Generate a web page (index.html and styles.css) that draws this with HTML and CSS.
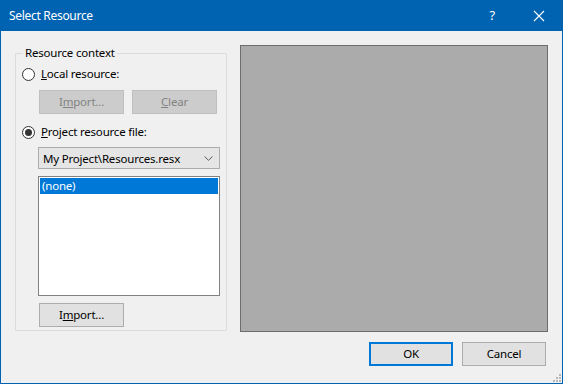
FILE: index.html
```html
<!DOCTYPE html>
<html>
<head>
<meta charset="utf-8">
<link rel="stylesheet" href="styles.css">
</head>
<body>
<div class="window">
  <div class="titlebar">
    <span class="title">Select Resource</span>
    <span class="help">?</span>
    <svg class="close" width="12" height="12" viewBox="0 0 12 12"><path d="M1 1L11 11M11 1L1 11" stroke="#fff" stroke-width="1.1" fill="none"/></svg>
  </div>
  <div class="content">
    <div class="main">
      <fieldset class="group">
        <legend class="legend">Resource context</legend>
        <div class="groupbody">
          <div class="radio-row r1">
            <span class="radio"></span>
            <span class="label"><u>L</u>ocal resource:</span>
          </div>
          <div class="btn-row">
            <span class="btn disabled">I<u>m</u>port...</span>
            <span class="btn disabled"><u>C</u>lear</span>
          </div>
          <div class="radio-row r2">
            <span class="radio checked"></span>
            <span class="label"><u>P</u>roject resource file:</span>
          </div>
          <div class="combo">
            <span class="combo-text">My Project\Resources.resx</span>
            <svg class="chev" width="9" height="5" viewBox="0 0 9 5"><path d="M0.5 0.5L4.5 4.3L8.5 0.5" stroke="#5a5a5a" stroke-width="1" fill="none"/></svg>
          </div>
          <div class="listbox">
            <div class="item selected">(none)</div>
          </div>
          <div class="btn-row bottom">
            <span class="btn">I<u>m</u>port...</span>
          </div>
        </div>
      </fieldset>
      <div class="preview"></div>
    </div>
    <div class="footer">
      <span class="btn default">OK</span>
      <span class="btn">Cancel</span>
    </div>
  </div>
  <svg class="grip" width="10" height="10" viewBox="0 0 10 10">
    <rect x="7" y="1" width="2" height="2" fill="#b8b8b8"/>
    <rect x="4" y="4" width="2" height="2" fill="#b8b8b8"/>
    <rect x="7" y="4" width="2" height="2" fill="#b8b8b8"/>
    <rect x="1" y="7" width="2" height="2" fill="#b8b8b8"/>
    <rect x="4" y="7" width="2" height="2" fill="#b8b8b8"/>
    <rect x="7" y="7" width="2" height="2" fill="#b8b8b8"/>
  </svg>
</div>
</body>
</html>
```

FILE: styles.css
```css
* { box-sizing: border-box; }
html, body { margin: 0; padding: 0; }
body {
  font-family: "Noto Sans", "Open Sans", sans-serif;
  font-size: 11.5px;
  letter-spacing: -0.2px;
  color: #000;
  background: #f0f0f0;
}
.window {
  position: relative;
  width: 563px;
  height: 384px;
  border: 1px solid #0063b1;
  border-top: none;
  background: #f0f0f0;
  display: flex;
  flex-direction: column;
}
.titlebar {
  height: 31px;
  margin: 0 -1px;
  background: #0063b1;
  color: #fff;
  display: flex;
  align-items: center;
  padding-left: 9px;
  padding-right: 18px;
}
.title { font-size: 12px; letter-spacing: -0.3px; flex: 1; padding-bottom: 1px; }
.help { font-size: 13px; margin-right: 38px; padding-bottom: 1px; }
.close { display: block; margin-top: 1px; }
.content {
  flex: 1;
  display: flex;
  flex-direction: column;
  padding: 14px 14px 0 14px;
}
.main {
  display: flex;
  gap: 13px;
  height: 286px;
}
.group {
  margin: 0;
  width: 212px;
  height: 286px;
  border: 1px solid #dcdcdc;
  padding: 0 0 0 6px;
  min-width: 0;
}
.legend {
  padding: 0 2px;
  margin-left: 1px;
  line-height: 16px;
}
.groupbody {
  display: flex;
  flex-direction: column;
  align-items: flex-start;
}
.radio-row {
  display: flex;
  align-items: center;
  height: 16px;
}
.r1 { margin-top: 5px; }
.r2 { margin-top: 10px; }
.radio {
  width: 13px;
  height: 13px;
  border: 1px solid #333;
  border-radius: 50%;
  background: #fff;
  margin-right: 6px;
  display: flex;
  align-items: center;
  justify-content: center;
}
.radio.checked::after {
  content: "";
  width: 7px;
  height: 7px;
  border-radius: 50%;
  background: #333;
}
.label { line-height: 16px; }
.btn-row {
  display: flex;
  gap: 8px;
  margin-top: 8px;
  margin-left: 17px;
}
.btn-row.bottom { margin-top: 7px; }
.btn {
  width: 85px;
  height: 24px;
  border: 1px solid #adadad;
  background: #e1e1e1;
  display: flex;
  align-items: center;
  justify-content: center;
  line-height: 16px;
}
.btn.disabled {
  background: #cccccc;
  border-color: #bfbfbf;
  color: #838383;
}
.btn.default {
  border: 2px solid #0078d7;
}
.combo {
  margin-top: 7px;
  margin-left: 16px;
  width: 182px;
  height: 22px;
  border: 1px solid #acacac;
  background: #e5e5e5;
  display: flex;
  align-items: center;
  padding: 0 6px 0 4px;
}
.combo-text { flex: 1; }
.chev { display: block; }
.listbox {
  margin-top: 7px;
  margin-left: 16px;
  width: 182px;
  height: 120px;
  border: 1px solid #828282;
  background: #fff;
  padding: 1px;
}
.item {
  height: 16px;
  line-height: 16px;
  padding-left: 2px;
}
.item.selected {
  background: #0078d7;
  color: #fff;
}
.preview {
  width: 308px;
  height: 287px;
  border: 1px solid #6d6d6d;
  background: #ababab;
}
.footer {
  display: flex;
  justify-content: flex-end;
  gap: 9px;
  margin-top: 11px;
  padding-right: 2px;
}
.footer .btn { width: 84px; }
.grip {
  position: absolute;
  right: 0;
  bottom: 0;
}
```
